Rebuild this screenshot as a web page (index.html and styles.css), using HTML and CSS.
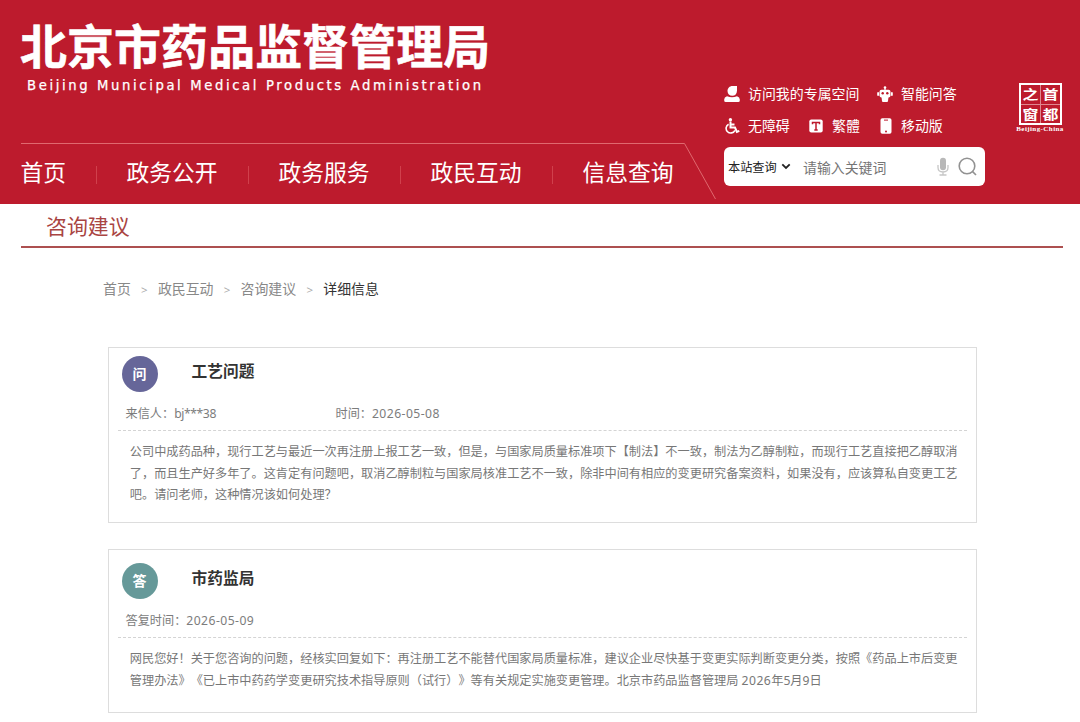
FILE: index.html
```html
<!DOCTYPE html>
<html lang="zh-CN">
<head>
<meta charset="utf-8">
<title>北京市药品监督管理局</title>
<link rel="stylesheet" href="styles.css">
</head>
<body>
<header class="header">
  <div class="main-side">
    <div class="brand">
      <h1 class="brand-name">北京市药品监督管理局</h1>
      <p class="brand-en">Beijing Municipal Medical Products Administration</p>
    </div>
    <nav class="nav">
      <svg class="nav-line" width="700" height="60" viewBox="0 0 700 60" fill="none" stroke="#e0696f"><path d="M0 .5H663.500L694.500 56"/></svg>
      <a class="nav-item">首页</a><i class="nav-sep"></i>
      <a class="nav-item">政务公开</a><i class="nav-sep"></i>
      <a class="nav-item">政务服务</a><i class="nav-sep"></i>
      <a class="nav-item">政民互动</a><i class="nav-sep"></i>
      <a class="nav-item">信息查询</a>
    </nav>
  </div>
  <div class="tools">
    <div class="tool-row">
      <a class="tool tool-space"><svg width="16" height="16" viewBox="0 0 16 16" fill="#fff"><path d="M8.500 0H13V4.500C13 8 11 9.800 8.300 9.800 5.500 9.800 3.500 7.800 3.500 5S5.500 0 8.500 0Z"/><path d="M3 10.300Q8 12.300 13 10.300Q15.800 11 15.800 13.500V14.500Q15.800 16 14.300 16H1.700Q.2 16 .2 14.500V13.500Q.2 11 3 10.300Z"/></svg><span>访问我的专属空间</span></a>
      <a class="tool"><svg width="16" height="16" viewBox="0 0 16 16"><g fill="#fff"><circle cx="8" cy="1.500" r="1.300"/><rect x="7.400" y="2" width="1.200" height="3"/><rect x="2.500" y="3.700" width="11" height="7.800" rx="2"/><rect x=".2" y="6" width="1.800" height="4" rx=".9"/><rect x="14" y="6" width="1.800" height="4" rx=".9"/><path d="M4.500 11H11.500L11 15Q11 16 10 16H6Q5 16 5 15Z"/></g><g fill="#bd1b2d"><circle cx="5.700" cy="7.300" r="1.200"/><circle cx="10.300" cy="7.300" r="1.200"/></g></svg><span>智能问答</span></a>
    </div>
    <div class="tool-row">
      <a class="tool tool-access"><svg width="16" height="16" viewBox="0 0 16 16" fill="none" stroke="#fff" stroke-width="2"><circle cx="6.400" cy="1.700" r="1.700" fill="#fff" stroke="none"/><path d="M6.500 3.500V9.500H11L12.900 13.900 15.300 12.900M6.500 6.500H10.500"/><path d="M4.600 6.300A4.600 4.600 0 1 0 10.900 12.300" stroke-width="1.600"/></svg><span>无障碍</span></a>
      <a class="tool tool-trad"><svg width="14" height="16" viewBox="0 0 14 16"><rect x=".3" y="1.500" width="13.400" height="13" rx="2" fill="#fff"/><path d="M3.500 6.200V4.500H10.500V6.200M7 4.500V12M5.300 12H8.700" fill="none" stroke="#bd1b2d" stroke-width="1.500"/></svg><span>繁體</span></a>
      <a class="tool tool-mobile"><svg width="12" height="16" viewBox="0 0 12 16"><rect x=".5" y=".2" width="11" height="15.600" rx="1.800" fill="#fff"/><rect x="4" y="1.600" width="4" height="1" fill="#bd1b2d"/><circle cx="6" cy="13.400" r="1" fill="#bd1b2d"/></svg><span>移动版</span></a>
    </div>
    <div class="search">
      <span class="search-scope">本站查询</span>
      <svg class="chevron" width="10" height="8" viewBox="0 0 10 8" fill="none" stroke="#222" stroke-width="1.800"><path d="M1.300 1.300 5 5 8.700 1.300"/></svg>
      <span class="search-hint">请输入关键词</span>
      <svg class="mic" width="12" height="20" viewBox="0 0 12 20"><rect x="3" y=".8" width="6" height="12.500" rx="3" fill="#b8b8b8"/><path d="M1 8V10.500Q1 15 6 15T11 10.500V8M6 15V18M2.500 18H9.500" fill="none" stroke="#c6c6c6" stroke-width="1.300"/></svg>
      <svg class="glass" width="20" height="20" viewBox="0 0 20 20" fill="none" stroke="#929292" stroke-width="1.600"><circle cx="9" cy="9" r="7.800"/><path d="M14.600 14.600 18 18"/></svg>
    </div>
  </div>
  <div class="seal">
    <div class="seal-box"><b>之</b><b>首</b><b>窗</b><b>都</b></div>
    <span class="seal-en">Beijing-China</span>
  </div>
</header>
<main>
  <h2 class="section-title">咨询建议</h2>
  <div class="crumbs"><a>首页</a><i>&gt;</i><a>政民互动</a><i>&gt;</i><a>咨询建议</a><i>&gt;</i><span class="current">详细信息</span></div>
  <section class="card question">
    <div class="card-head"><span class="badge">问</span><h3 class="card-title">工艺问题</h3></div>
    <div class="meta"><span class="sender">来信人：<span class="name">bj***38</span></span><span>时间：<span class="date">2026-05-08</span></span></div>
    <p class="text">公司中成药品种，现行工艺与最近一次再注册上报工艺一致，但是，与国家局质量标准项下【制法】不一致，制法为乙醇制粒，而现行工艺直接把乙醇取消<br>了，而且生产好多年了。这肯定有问题吧，取消乙醇制粒与国家局核准工艺不一致，除非中间有相应的变更研究备案资料，如果没有，应该算私自变更工艺<br>吧。请问老师，这种情况该如何处理？</p>
  </section>
  <section class="card answer">
    <div class="card-head"><span class="badge">答</span><h3 class="card-title">市药监局</h3></div>
    <div class="meta"><span>答复时间：<span class="date">2026-05-09</span></span></div>
    <p class="text">网民您好！关于您咨询的问题，经核实回复如下：再注册工艺不能替代国家局质量标准，建议企业尽快基于变更实际判断变更分类，按照《药品上市后变更<br>管理办法》《已上市中药药学变更研究技术指导原则（试行）》等有关规定实施变更管理。北京市药品监督管理局 <span class="date">2026</span>年5月9日</p>
  </section>
</main>
</body>
</html>
```
FILE: styles.css
```css
* { box-sizing: border-box; }
body {
  margin: 0;
  background: #fff;
  font-family: "Noto Sans", "Noto Sans CJK SC", sans-serif;
  text-spacing-trim: space-all;
  overflow: hidden;
}
h1, h2, h3, p { margin: 0; }
i { font-style: normal; }
svg { display: block; flex: none; }
span, a { white-space: nowrap; }

.header {
  display: flex;
  height: 204px;
  padding-left: 21px;
  background: #bd1b2d;
  color: #fff;
}
.main-side { width: 703px; flex: none; }
.brand { height: 143px; padding-top: 19px; }
.brand-name {
  margin-left: -1px;
  font: bold 46.9px/50px "Noto Sans CJK SC", sans-serif;
  letter-spacing: .15px;
  white-space: nowrap;
  -webkit-text-stroke: .6px #fff;
}
.brand-en {
  margin-top: 8px;
  padding-left: 6px;
  font: 13.2px/18px "DejaVu Sans", sans-serif;
  letter-spacing: 2.62px;
  white-space: nowrap;
  -webkit-text-stroke: .25px #fff;
}
.nav {
  position: relative;
  display: flex;
  align-items: center;
  height: 60px;
}
.nav-line { position: absolute; left: 0; top: 0; }
.nav-item { width: 91px; font-size: 22.8px; line-height: 32px; text-indent: -.6px; }
.nav-item:nth-of-type(1) { width: 45px; }
.nav-sep { width: 1px; height: 18px; margin: 3px 30px 0; background: #d0404c; }

.tools { width: 261px; flex: none; padding-top: 78px; }
.tool-row { display: flex; height: 32px; align-items: center; }
.tool { display: flex; align-items: center; gap: 8px; font-size: 13.95px; line-height: 20px; }
.tool span { margin-top: -1px; }
.tool-space { width: 153px; }
.tool-access { width: 85px; }
.tool-trad { width: 71px; gap: 9px; }
.tool-mobile { gap: 9px; }
.search {
  display: flex;
  align-items: center;
  height: 39px;
  width: 261px;
  margin-top: 5px;
  padding-left: 4px;
  border-radius: 6px;
  background: #fff;
}
.search-scope { width: 53px; font-size: 12.2px; color: #222; }
.search-hint { width: 134px; margin-left: 12px; font-size: 13.9px; color: #757575; }
.glass { margin-left: 9px; }

.seal {
  display: flex;
  flex-direction: column;
  align-items: center;
  width: 50px;
  margin-left: 30px;
  padding-top: 83px;
}
.seal-box {
  display: grid;
  grid-template-columns: 1fr 1fr;
  width: 43px;
  height: 42px;
  gap: 1px;
  border: 2px solid #fff;
  background: linear-gradient(#e0878f, #e0878f) center / 1px 100% no-repeat, linear-gradient(#e0878f, #e0878f) center / 100% 1px no-repeat;
}
.seal-box b {
  font: bold 14.5px/18px "Noto Sans CJK SC", sans-serif;
  text-align: center;
  transform: scale(1.1, .88);
}
.seal-en { font: bold 7px/9px "Liberation Serif", serif; letter-spacing: .42px; }

.section-title {
  height: 44px;
  margin: 0 17px 0 21px;
  padding-left: 25px;
  border-bottom: 2px solid #ad5050;
  color: #a94442;
  font-size: 20.9px;
  font-weight: 400;
  line-height: 45px;
}
.crumbs {
  display: flex;
  height: 20px;
  margin: 31px 0 0 103px;
  color: #888;
  font-size: 13.9px;
  line-height: 20px;
}
.crumbs i { width: 27.100px; text-align: center; font-size: 11.5px; color: #aaa; line-height: 22px; }
.crumbs .current { color: #333; }

.card {
  width: 869px;
  margin-left: 108px;
  border: 1px solid #ddd;
}
.question { height: 176px; margin-top: 48px; padding-top: 8px; }
.answer { height: 164px; margin-top: 26px; padding-top: 13px; }
.card-head { display: flex; gap: 34px; height: 36px; padding-left: 12.6px; }
.badge {
  width: 36px;
  height: 36px;
  border-radius: 50%;
  background: #666699;
  color: #fff;
  font: bold 14px/35px "Noto Sans CJK SC", sans-serif;
  text-align: center;
}
.answer .badge { background: #669999; }
.card-title { font-size: 15.7px; line-height: 31px; color: #333; }
.meta {
  display: flex;
  height: 39px;
  margin: 0 9px;
  padding: 10px 0 0 7.500px;
  border-bottom: 1px dashed #d4d4d4;
  color: #7c7c7c;
  font-size: 12.17px;
  line-height: 24px;
}
.sender { width: 210px; }
.name { letter-spacing: -.4px; }
.date { letter-spacing: .45px; }
.text {
  padding: 10px 0 0 20.8px;
  color: #777;
  font-size: 12.18px;
  line-height: 21.600px;
  white-space: nowrap;
}
```
